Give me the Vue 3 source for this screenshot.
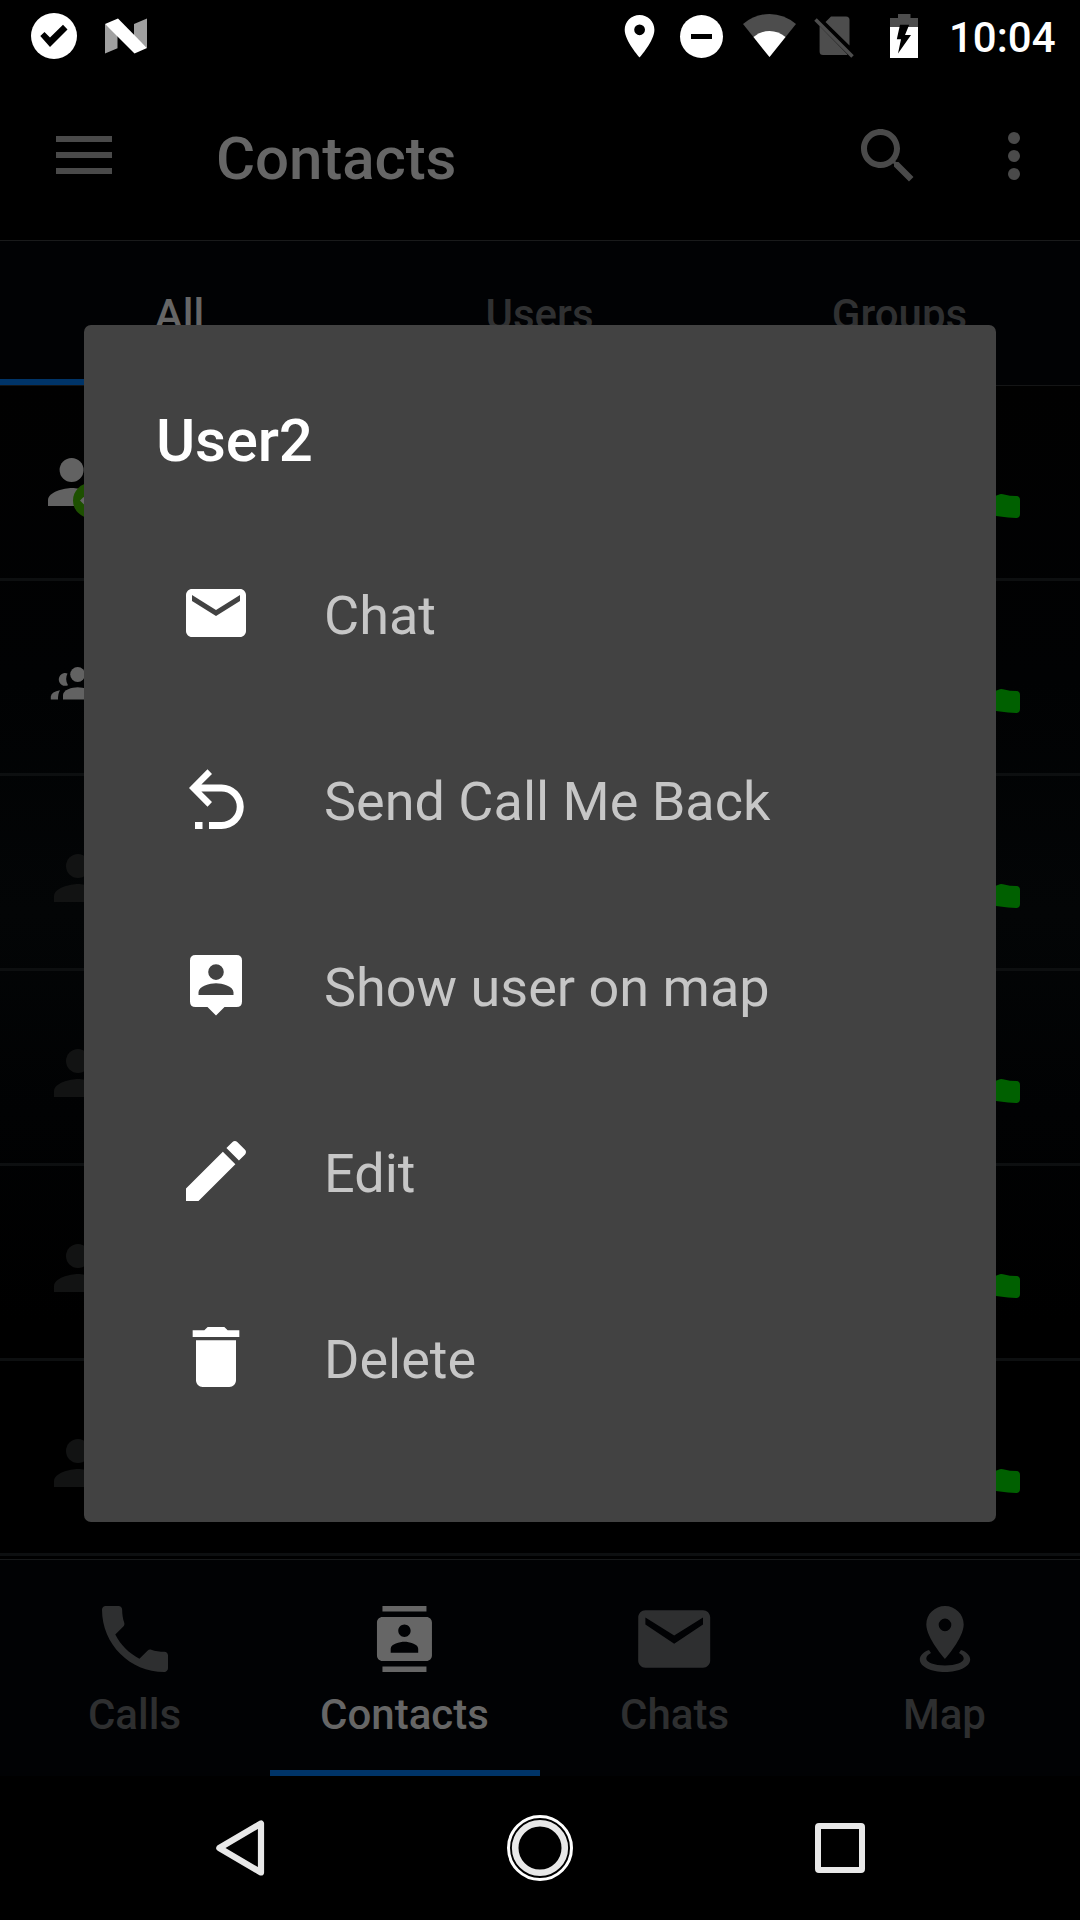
<script setup>
const tabs = [
  { label: 'All', active: true },
  { label: 'Users', active: false },
  { label: 'Groups', active: false },
]

const contacts = [
  { id: 1, kind: 'self' },
  { id: 2, kind: 'group' },
  { id: 3, kind: 'offline' },
  { id: 4, kind: 'offline' },
  { id: 5, kind: 'offline' },
  { id: 6, kind: 'offline' },
]

const actions = [
  { icon: 'chat', label: 'Chat' },
  { icon: 'callback', label: 'Send Call Me Back' },
  { icon: 'locate', label: 'Show user on map' },
  { icon: 'edit', label: 'Edit' },
  { icon: 'delete', label: 'Delete' },
]

const sections = [
  { icon: 'calls', label: 'Calls', active: false },
  { icon: 'contacts', label: 'Contacts', active: true },
  { icon: 'chats', label: 'Chats', active: false },
  { icon: 'map', label: 'Map', active: false },
]
</script>

<template>
  <div class="screen">
    <header class="status">
      <svg class="s-check" width="46" height="46" viewBox="31 13 46 46">
        <circle cx="54" cy="36" r="23" fill="#fff" />
        <path d="M40.3 36L44.5 32 50 37.5 63 24.7 67.5 29.5 50 47z" fill="#000" />
      </svg>
      <svg class="s-n" width="42" height="36" viewBox="105 18 42 36">
        <path d="M105 24V53.4L117.5 48.3V34zM134 24L147 18.5V48L134 36z" fill="#a0a0a0" />
        <path d="M105 24L118 18.5 147 48 134.5 53.4z" fill="#fff" />
      </svg>
      <span class="spacer"></span>
      <svg class="s-right" width="302" height="46" viewBox="622 13 302 46">
        <path fill="#fff" fill-rule="evenodd" d="M639.6 15c-8.3 0-14.9 6.6-14.9 14.8C624.7 41 639.6 57.6 639.6 57.6S654.4 41 654.4 29.8C654.4 21.6 647.9 15 639.6 15zM639.6 35.2a5.4 5.4 0 1 1 0-10.800 5.4 5.4 0 0 1 0 10.800z" />
        <circle cx="701.5" cy="36.5" r="21.5" fill="#fff" />
        <path d="M691 34h21v5h-21z" fill="#000" />
        <path d="M743 24Q755 14 769.5 14T796 24L769.5 57z" fill="#4d4d4d" />
        <path d="M753.5 37Q760.5 31 769.5 31T785.5 37L769.5 57z" fill="#fff" />
        <path d="M825.5 22L831 16.5H846Q849.5 16.5 849.5 20V45.5zM819.6 26L847.5 54.5Q846.8 55 846 55H823Q819.6 55 819.6 51.5z" fill="#4d4d4d" />
        <path d="M815.5 19.5L852.5 56.5" stroke="#4d4d4d" stroke-width="3.6" />
        <path d="M898 14h12.5v4H918v9.5H890V18h8z" fill="#4d4d4d" />
        <path d="M890 27h28v31h-28z" fill="#fff" />
        <path d="M900 24.7H909.2L905 35H911L898 53.5 901 39.3H896.8z" fill="#000" />
      </svg>
      <span class="clock">10:04</span>
    </header>

    <div class="appbar">
      <svg width="72" height="72" viewBox="0 0 72 72"><path d="M8 16h56v6H8zM8 32h56v6H8zM8 48h56v6H8z" /></svg>
      <h1>Contacts</h1>
      <svg width="72" height="72" viewBox="0 0 24 24"><path d="M15.5 14h-.79l-.28-.27C15.41 12.59 16 11.11 16 9.5 16 5.91 13.09 3 9.5 3S3 5.91 3 9.5 5.91 16 9.5 16c1.61 0 3.09-.59 4.23-1.57l.27.28v.79l5 4.99L20.49 19l-4.99-5zm-6 0C7.01 14 5 11.99 5 9.5S7.01 5 9.5 5 14 7.01 14 9.5 11.99 14 9.5 14z" /></svg>
      <svg class="more" width="72" height="72" viewBox="0 0 24 24"><circle cx="12" cy="6" r="2" /><circle cx="12" cy="12" r="2" /><circle cx="12" cy="18" r="2" /></svg>
    </div>

    <nav class="tabs">
      <div v-for="t in tabs" :key="t.label" class="tab" :class="{ active: t.active }">{{ t.label }}</div>
    </nav>

    <main class="list">
      <div v-for="c in contacts" :key="c.id" class="row">
        <svg v-if="c.kind === 'self'" class="avatar" width="108" height="84" viewBox="0 0 108 84">
          <circle cx="35.6" cy="24" r="12" fill="#626262" />
          <path d="M12 60V54C12 46 28 42 36 42S60 46 60 54V60z" fill="#626262" />
          <circle cx="54.500" cy="54.500" r="17.500" fill="#1d5000" />
          <path d="M44 54.500l3.500-3.500 5 5 9-9 3.500 3.500L52.500 63z" fill="#666" />
        </svg>
        <svg v-else-if="c.kind === 'group'" class="avatar" width="108" height="84" viewBox="0 0 108 84">
          <g fill="#626262">
            <path d="M31.500 32.500A6.400 6.400 0 1 0 32 44.200Q28.500 38.500 31.500 32.500zM14.800 58.500V55.500Q15.500 50.500 24 49.200 22 52 22 58.500z" />
            <circle cx="41.700" cy="33.500" r="7.500" />
            <path d="M27 58.500V54C27 49 36 46.300 41.700 46.300S57 49 57 54V58.500z" />
          </g>
        </svg>
        <svg v-else class="avatar" width="108" height="84" viewBox="-6 -6 108 84">
          <circle cx="36" cy="24" r="12" fill="#121313" />
          <path d="M12 60V54C12 46 28 42 36 42S60 46 60 54V60z" fill="#121313" />
        </svg>
        <svg class="call" width="30" height="30" viewBox="990 687 30 30">
          <path d="M990 693L998.500 689.800Q1000.500 688.500 1003 689.300L1010 690.700 1016.500 691Q1020 691.300 1020 695V709Q1020 713 1016 713L1008 712.600 996 711 990 710z" fill="#006000" />
        </svg>
      </div>
    </main>

    <nav class="bottom">
      <div v-for="s in sections" :key="s.label" class="section" :class="{ active: s.active }">
        <svg v-if="s.icon === 'calls'" width="88" height="88" viewBox="0 0 24 24"><path d="M6.62 10.79c1.44 2.83 3.76 5.14 6.59 6.59l2.2-2.2c.27-.27.67-.36 1.02-.24 1.12.37 2.33.57 3.57.57.55 0 1 .45 1 1V20c0 .55-.45 1-1 1-9.39 0-17-7.61-17-17 0-.55.45-1 1-1h3.5c.55 0 1 .45 1 1 0 1.25.2 2.45.57 3.57.11.35.03.74-.25 1.02l-2.2 2.2z" /></svg>
        <svg v-else-if="s.icon === 'contacts'" width="88" height="88" viewBox="-3.8 -4 32 32"><path d="M20 0H4v2h16V0zM4 24h16v-2H4v2zM20 4H4c-1.1 0-2 .9-2 2v12c0 1.1.9 2 2 2h16c1.1 0 2-.9 2-2V6c0-1.1-.9-2-2-2zm-8 2.75c1.24 0 2.25 1.01 2.25 2.25s-1.01 2.25-2.25 2.25S9.75 10.24 9.75 9 10.76 6.75 12 6.75zM17 17H7v-1.5c0-1.67 3.33-2.5 5-2.5s5 .83 5 2.5V17z" /></svg>
        <svg v-else-if="s.icon === 'chats'" width="88" height="88" viewBox="0 -.222 24.444 24.444"><path d="M20 4H4c-1.1 0-1.99.9-1.99 2L2 18c0 1.1.9 2 2 2h16c1.1 0 2-.9 2-2V6c0-1.1-.9-2-2-2zm0 4l-8 5.3L4 8V6l8 5 8-5v2z" /></svg>
        <svg v-else width="88" height="88" viewBox="901 1595 88 88">
          <path fill-rule="evenodd" d="M945 1606c-10.300 0-18.700 8.200-18.700 18.500C926.300 1638 945 1659 945 1659s18.700-21 18.700-34.500c0-10.300-8.400-18.500-18.700-18.500zM945 1631.200a6.300 6.300 0 1 1 0-12.600 6.300 6.300 0 0 1 0 12.600z" />
          <path d="M929 1650C923 1652 919.800 1656 919.800 1659.500 919.800 1666.500 931 1672 945 1672S970.200 1666.500 970.200 1659.500C970.200 1656 967 1652 961 1650L959 1653C962 1654.500 963.700 1656.500 963.700 1658.500 963.700 1662.500 955.500 1665.500 945 1665.500S926.300 1662.500 926.300 1658.500C926.300 1656.500 928 1654.500 931 1653z" />
        </svg>
        <span>{{ s.label }}</span>
      </div>
    </nav>

    <footer class="sysnav">
      <svg width="72" height="72" viewBox="204 1812 72 72"><path d="M219.300 1848L261 1823.500V1872.500z" fill="none" stroke="#e8e8e8" stroke-width="6.200" stroke-linejoin="round" /></svg>
      <svg width="72" height="72" viewBox="504 1812 72 72" fill="none"><circle cx="540" cy="1848" r="31.500" stroke="#fff" stroke-width="3" /><circle cx="540" cy="1848" r="24.800" stroke="#e8e8e8" stroke-width="6.600" /></svg>
      <svg width="72" height="72" viewBox="804 1812 72 72"><rect x="818" y="1826" width="44" height="44" rx="1" fill="none" stroke="#e8e8e8" stroke-width="6" stroke-linejoin="round" /></svg>
    </footer>

    <section class="dialog">
      <h2>User2</h2>
      <ul>
        <li v-for="a in actions" :key="a.icon">
          <svg v-if="a.icon === 'chat'" width="72" height="72" viewBox="0 0 24 24"><path d="M20 4H4c-1.1 0-1.99.9-1.99 2L2 18c0 1.1.9 2 2 2h16c1.1 0 2-.9 2-2V6c0-1.1-.9-2-2-2zm0 4l-8 5-8-5V6l8 5 8-5v2z" /></svg>
          <svg v-else-if="a.icon === 'callback'" width="72" height="72" viewBox="0 0 72 72"><path d="M9 25L27.500 6.300 32 11 21.400 21.500H41.500a22.250 22.250 0 0 1 0 44.500H29V59H41.500a15.250 15.250 0 0 0 0-30.500H21.400L32 39 27.500 43.700zM15 59h7.500v7H15z" /></svg>
          <svg v-else-if="a.icon === 'locate'" width="72" height="72" viewBox="0 0 72 72"><path fill-rule="evenodd" d="M15.500 6h41q5.500 0 5.500 5.500v41q0 5.500-5.500 5.500H44.500L36 66.500 27.500 58H15.500Q10 58 10 52.500v-41Q10 6 15.500 6zM36 15.300a7.800 7.800 0 1 0 0 15.600 7.800 7.800 0 0 0 0-15.600zM18.500 46H53.500V43.200C53.500 37.500 42 34.300 36 34.300S18.500 37.500 18.500 43.200z" /></svg>
          <svg v-else-if="a.icon === 'edit'" width="72" height="72" viewBox="1.200 1.200 21.600 21.600"><path d="M3 17.25V21h3.75L17.81 9.94l-3.75-3.75L3 17.25zM20.71 7.04c.39-.39.39-1.02 0-1.41l-2.34-2.34c-.39-.39-1.02-.39-1.41 0l-1.83 1.83 3.75 3.75 1.83-1.83z" /></svg>
          <svg v-else width="72" height="72" viewBox="1.200 1.200 21.600 21.600"><path d="M6 19c0 1.1.9 2 2 2h8c1.1 0 2-.9 2-2V7H6v12zM19 4h-3.5l-1-1h-5l-1 1H5v2h14V4z" /></svg>
          <span>{{ a.label }}</span>
        </li>
      </ul>
    </section>
  </div>
</template>

<style>
html, body { margin: 0; background: #000; }
</style>

<style scoped>
.screen {
  position: relative;
  width: 1080px;
  height: 1920px;
  overflow: hidden;
  display: flex;
  flex-direction: column;
  background: #000;
  font-family: Roboto, "Noto Sans", sans-serif;
}
svg { display: block; flex: none; }
h1, h2, ul { margin: 0; padding: 0; font-weight: 500; }

.status { height: 72px; display: flex; align-items: center; box-sizing: border-box; padding: 0 25px 0 31px; }
.s-n { margin-left: 28px; }
.spacer { flex: 1; }
.clock { margin-left: 25px; width: 106px; color: #fff; font-size: 42px; font-weight: 500; line-height: 50px; padding-top: 4px; white-space: nowrap; }

.appbar { height: 168px; box-sizing: border-box; display: flex; align-items: flex-start; padding: 48px 30px 0 48px; }
.appbar svg { fill: #4a4a4a; }
.appbar h1 { flex: 1; margin-left: 96px; font-size: 60px; line-height: 72px; padding-top: 3px; color: #666; letter-spacing: -0.1px; }
.appbar .more { margin-left: 54px; }

.tabs { height: 146px; box-sizing: border-box; display: flex; border-top: 1px solid #191a1b; border-bottom: 1px solid #141516; background: #010204; }
.tab { flex: 1; box-sizing: border-box; text-align: center; font-size: 42px; font-weight: 500; line-height: 50px; padding: 49px 1px 0 0; color: #303132; }
.tab.active { color: #666; border-bottom: 6px solid #003468; }

.list { background: linear-gradient(#010101, #010203 25%, #030506 45%, #010203 62%, #000 80%); }
.row { height: 195px; box-sizing: border-box; border-bottom: 3px solid #0d0f10; display: flex; justify-content: space-between; }
.avatar { margin: 60px 0 0 36px; }
.call { margin: 106px 60px 0 0; }

.bottom { height: 217px; margin-top: 3px; box-sizing: border-box; display: flex; background: #010204; border-top: 1px solid #17191a; }
.section { flex: 1; box-sizing: border-box; display: flex; flex-direction: column; align-items: center; padding-top: 35px; color: #2e2f30; font-size: 42px; font-weight: 500; line-height: 50px; }
.section svg { fill: currentColor; }
.section span { padding: 7px 1px 0 0; }
.section.active { color: #666; border-bottom: 6px solid #003468; }

.sysnav { height: 144px; display: flex; align-items: center; justify-content: center; gap: 228px; }

.dialog { position: absolute; left: 84px; top: 325px; width: 912px; height: 1197px; box-sizing: border-box; border-radius: 7px; background: #424242; }
.dialog h2 { margin: 81px 0 0 72px; font-size: 60px; line-height: 70px; color: #fff; letter-spacing: -0.2px; }
.dialog ul { list-style: none; margin-top: 44px; font-weight: 400; }
.dialog li { height: 186px; display: flex; align-items: center; padding-left: 96px; color: #c6c6c6; font-size: 54px; line-height: 64px; }
.dialog li svg { fill: #fff; }
.dialog li span { margin-left: 72px; padding-top: 5px; }
</style>
